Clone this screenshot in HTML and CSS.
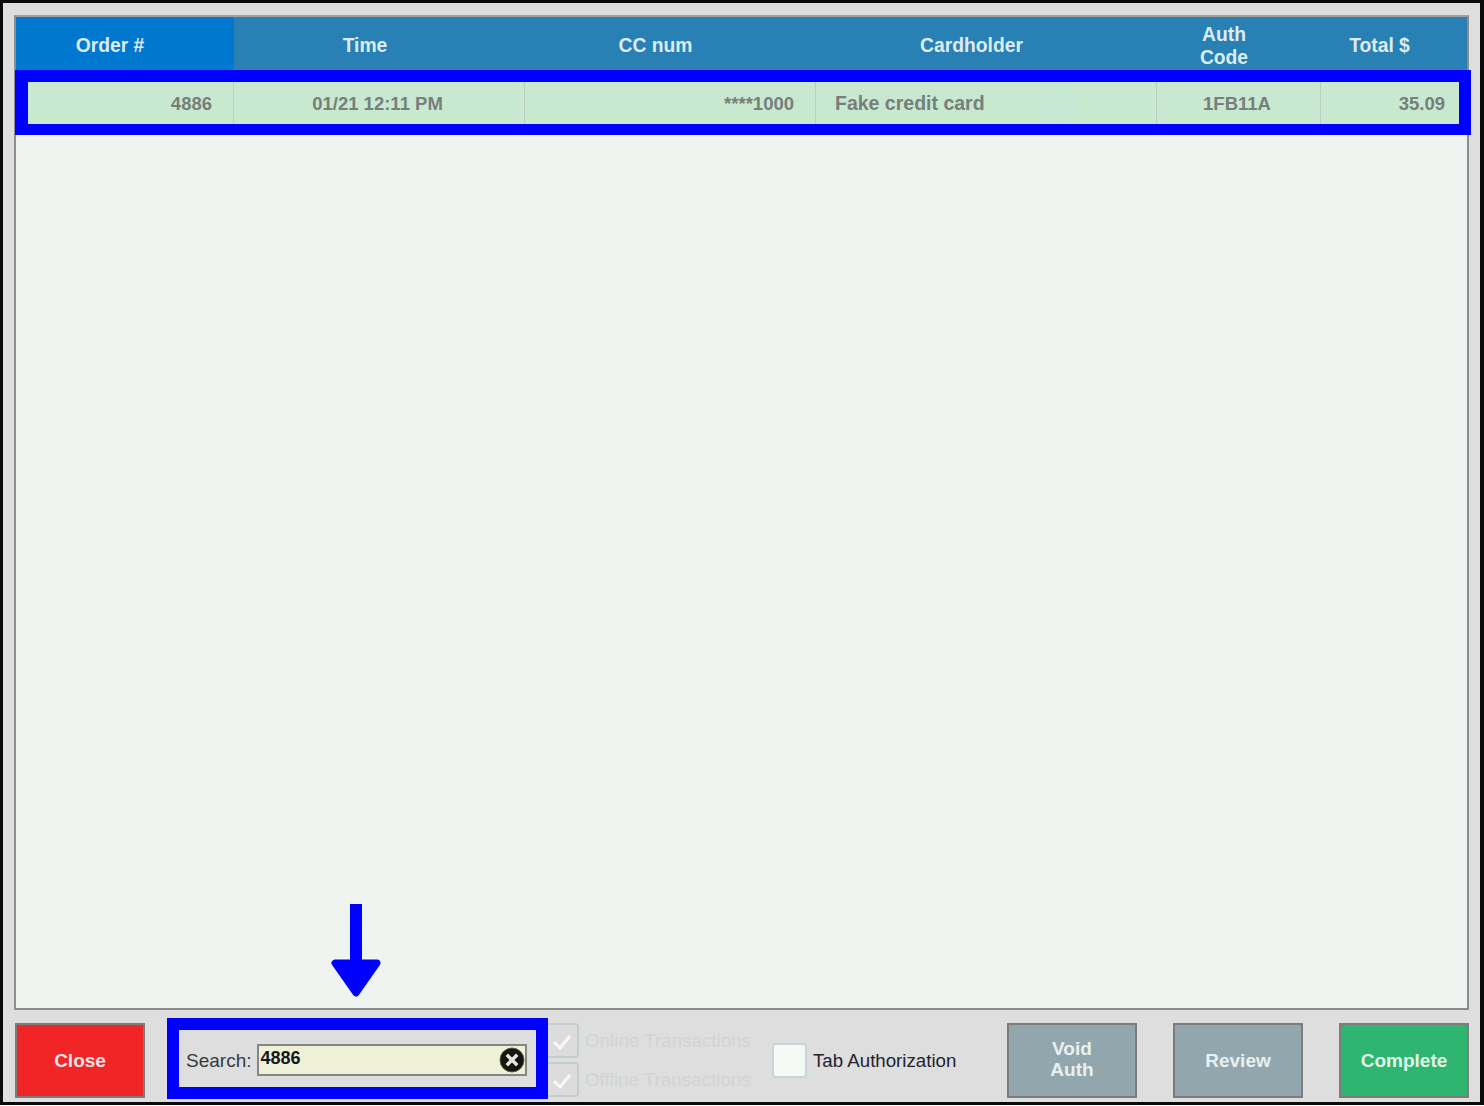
FILE: index.html
```html
<!DOCTYPE html>
<html lang="en">

<head>
  <meta charset="UTF-8" />
  <meta name="viewport" content="width=device-width, initial-scale=1.0" />
  <title>Transactions</title>
  <link rel="stylesheet" href="styles.css">
</head>

<body>
  <div class="frame">
    <!-- transaction table -->
    <div class="table">
      <div class="head_row">
        <div class="head_cell sorted">Order #</div>
        <div class="head_cell">Time</div>
        <div class="head_cell">CC num</div>
        <div class="head_cell">Cardholder</div>
        <div class="head_cell">Auth<br />Code</div>
        <div class="head_cell">Total $</div>
      </div>
      <div class="data_row">
        <div class="cell right">4886</div>
        <div class="cell center">01/21 12:11 PM</div>
        <div class="cell right">****1000</div>
        <div class="cell left">Fake credit card</div>
        <div class="cell center">1FB11A</div>
        <div class="cell right">35.09</div>
        <div class="ghost"></div>
        <!-- blue annotation round the row -->
        <div class="mark mark_row"></div>
      </div>
    </div>
    <!-- bottom bar -->
    <div class="footer">
      <button class="btn red">Close</button>
      <div class="search">
        <label class="search_label">Search:</label>
        <div class="search_box">
          <input type="text" class="search_input" value="4886" />
          <svg class="clear_icon" viewBox="0 0 26 26" width="26" height="26">
            <circle cx="13" cy="13" r="12" fill="#141410" stroke="#5c5c3c" stroke-width="1" />
            <path d="M9 9 L17 17 M17 9 L9 17" stroke="#e6e6dc" stroke-width="3.4" stroke-linecap="square" />
          </svg>
        </div>
        <div class="mark mark_search"></div>
        <svg class="arrow" viewBox="0 0 50 93" width="50" height="93">
          <rect x="19" y="0" width="12" height="58" fill="#0000ff" />
          <path d="M4 59 L46 59 L25 89 Z" fill="#0000ff" stroke="#0000ff" stroke-width="7" stroke-linejoin="round" />
        </svg>
      </div>
      <div class="filters">
        <div class="check_row">
          <span class="check">
            <svg viewBox="0 0 24 24" width="24" height="24"><path d="M4 13 L10 19 L20 7" fill="none" stroke="#f8faf8" stroke-width="3" /></svg>
          </span>
          <span class="check_text">Online Transactions</span>
        </div>
        <div class="check_row">
          <span class="check">
            <svg viewBox="0 0 24 24" width="24" height="24"><path d="M4 13 L10 19 L20 7" fill="none" stroke="#f8faf8" stroke-width="3" /></svg>
          </span>
          <span class="check_text">Offline Transactions</span>
        </div>
      </div>
      <div class="tab_auth">
        <span class="tab_check"></span>
        <span class="tab_text">Tab Authorization</span>
      </div>
      <div class="actions">
        <button class="btn slate two_line">Void<br />Auth</button>
        <button class="btn slate">Review</button>
        <button class="btn green">Complete</button>
      </div>
    </div>
  </div>
</body>

</html>
```

FILE: styles.css
```css
html,
body {
  margin: 0px;
  padding: 0px;
  height: 100%;
}

body {
  font-family: "Liberation Sans", Arial, sans-serif;
  background-color: #fff;
}

.frame {
  width: 1484px;
  height: 1105px;
  box-sizing: border-box;
  border: solid #0a0a0a;
  border-width: 3px 4px 3px 3px;
  padding: 12px 11px 0 11px;
  background-color: #dedede;
  display: flex;
  flex-direction: column;
}

.table {
  flex: 1;
  border: 2px solid #8c8c8c;
  border-top-color: #a0a0a0;
  background-color: #eff4f0;
}

.head_row,
.data_row {
  display: grid;
}

.head_row {
  height: 53px;
  grid-template-columns: 218px 290px 291px 341px 164px 147px;
}

.head_cell {
  display: flex;
  align-items: center;
  justify-content: center;
  padding-right: 28px;
  padding-top: 4px;
  text-align: center;
  font-size: 19.3px;
  line-height: 23px;
  font-weight: bold;
  color: #dcecf4;
  background-color: #2880b4;
}

.head_cell.sorted {
  background-color: #0078d0;
  padding-right: 30px;
}

.data_row {
  height: 65px;
  position: relative;
  grid-template-columns: 218px 291px 291px 341px 164px 146px;
}

.cell {
  display: flex;
  align-items: center;
  padding: 2px 21px 0 19px;
  font-size: 18.5px;
  font-weight: bold;
  color: #767f7a;
  background-color: #c9e8d0;
  border-right: 1px solid #bccdc1;
}

.cell:last-of-type {
  border-right: 0;
  padding-right: 22px;
}

.cell.right {
  justify-content: flex-end;
}

.cell.center {
  justify-content: center;
  padding: 2px 3px 0 0;
}

.cell.left {
  font-size: 19.5px;
}

.ghost {
  position: absolute;
  left: 1024px;
  top: 13px;
  width: 40px;
  height: 40px;
  border-radius: 20px;
  background-color: #c6e7d1;
}

/* blue annotation boxes */
.mark {
  position: absolute;
  box-sizing: border-box;
  border: 12px solid #0000ff;
  pointer-events: none;
  z-index: 5;
}

.mark_row {
  left: -1px;
  top: 0;
  right: -4px;
  bottom: 0;
  border-left-width: 13px;
  border-bottom-width: 11px;
}

.mark_search {
  left: -19px;
  top: -5px;
  right: -21px;
  bottom: -1px;
}

.arrow {
  position: absolute;
  left: 145px;
  top: -119px;
  z-index: 5;
}

.footer {
  height: 92px;
  flex-shrink: 0;
  box-sizing: border-box;
  padding: 13px 0 4px 1px;
  display: flex;
  align-items: stretch;
}

.btn {
  width: 130px;
  height: 75px;
  padding: 0;
  box-sizing: border-box;
  border: 2px solid #7c7c7c;
  font-family: inherit;
  font-size: 19px;
  line-height: 21px;
  font-weight: bold;
  color: #e8f0f0;
}

.btn.two_line {
  padding-bottom: 4px;
}

.btn.red {
  background-color: #f22526;
  color: #fbe4e4;
}

.btn.slate {
  background-color: #92a7ad;
}

.btn.green {
  background-color: #2eb56f;
  color: #e4f6ea;
}

.search {
  margin-left: 41px;
  width: 341px;
  position: relative;
  display: flex;
  align-items: center;
}

.search_label {
  font-size: 19px;
  color: #333b42;
  margin-right: 7px;
}

.search_box {
  flex: 1;
  position: relative;
  margin-bottom: 2px;
  margin-left: -1px;
}

.search_input {
  display: block;
  width: 100%;
  height: 32px;
  box-sizing: border-box;
  border: 2px solid #858585;
  background-color: #eef1d6;
  padding: 0 0 3px 1px;
  font-family: inherit;
  font-size: 18px;
  font-weight: bold;
  color: #14181c;
  outline: none;
}

.clear_icon {
  position: absolute;
  right: 2px;
  top: 3px;
}

.filters {
  margin-left: 17px;
  width: 207px;
  display: flex;
  flex-direction: column;
  gap: 4px;
}

.check_row {
  display: flex;
  align-items: center;
  height: 35px;
}

.check {
  width: 35px;
  height: 35px;
  box-sizing: border-box;
  border: 2px solid #c2cdcd;
  border-radius: 4px;
  background-color: #dcdcdc;
  display: flex;
  align-items: center;
  justify-content: center;
}

.check_text {
  margin-left: 6px;
  font-size: 18.8px;
  color: #d0d5d3;
  white-space: nowrap;
}

.tab_auth {
  margin-left: 21px;
  display: flex;
  align-items: center;
}

.tab_check {
  width: 35px;
  height: 35px;
  box-sizing: border-box;
  border: 2px solid #c6d4de;
  border-radius: 4px;
  background-color: #f6faf7;
}

.tab_text {
  margin-left: 6px;
  font-size: 18.7px;
  color: #23232e;
  white-space: nowrap;
}

.actions {
  margin-left: auto;
  display: flex;
  gap: 36px;
}
```
